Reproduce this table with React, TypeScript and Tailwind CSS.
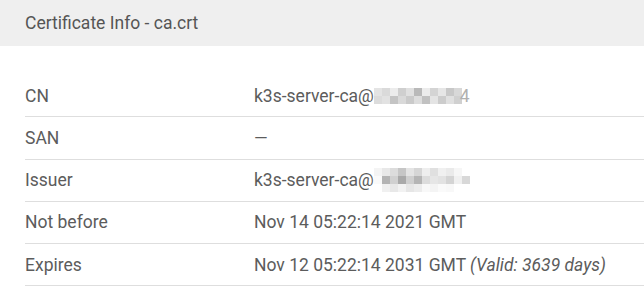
import React from 'react';

const font = { fontFamily: 'Roboto, "Liberation Sans", sans-serif' };

// blurred (pixelated) bits of the hostnames
const cnBlocks = [
  ['#e4e4e4', '#dadada', '#ececec', '#cfcfcf', '#e0e0e0', '#b9b9b9', '#ececec', '#d4d4d4', '#e6e6e6', '#c8c8c8', '#d8d8d8'],
  ['#dcdcdc', '#e2e2e2', '#c4c4c4', '#d9d9d9', '#cacaca', '#dddddd', '#c1c1c1', '#e4e4e4', '#cccccc', '#e0e0e0', '#d0d0d0'],
];
const issuerBlocks = [
  ['#f4f4f4', '#e8e8e8', '#dcdcdc', '#c6c6c6', '#e4e4e4', '#d6d6d6', '#eeeeee', '#e0e0e0', '#f0f0f0', '#eaeaea', '#f6f6f6', '#ffffff'],
  ['#fafafa', '#b4b4b4', '#d0d0d0', '#a9a9a9', '#cfcfcf', '#b5b5b5', '#dcdcdc', '#e6e6e6', '#e2e2e2', '#d4d4d4', '#f0f0f0', '#d8d8d8'],
  ['#ffffff', '#f0f0f0', '#e8e8e8', '#f2f2f2', '#e6e6e6', '#ececec', '#f8f8f8', '#f4f4f4', '#fafafa', '#f8f8f8', '#ffffff', '#ffffff'],
];

function Pixels({ blocks }: { blocks: string[][] }) {
  return (
    <span className="inline-flex flex-col align-middle">
      {blocks.map((row, i) => (
        <span key={i} className="flex">
          {row.map((c, j) => (
            <span key={j} className="block w-[8px] h-[8px]" style={{ background: c }} />
          ))}
        </span>
      ))}
    </span>
  );
}

const rows: { label: string; value: React.ReactNode }[] = [
  {
    label: 'CN',
    value: (
      <span className="flex items-center">
        k3s-server-ca@
        <Pixels blocks={cnBlocks} />
        <span className="ml-[-2px] text-[#b0b0b0]">4</span>
      </span>
    ),
  },
  { label: 'SAN', value: '—' },
  {
    label: 'Issuer',
    value: (
      <span className="flex items-center">
        k3s-server-ca@
        <Pixels blocks={issuerBlocks} />
      </span>
    ),
  },
  { label: 'Not before', value: 'Nov 14 05:22:14 2021 GMT' },
  {
    label: 'Expires',
    value: (
      <span>
        Nov 12 05:22:14 2031 GMT <i>(Valid: 3639 days)</i>
      </span>
    ),
  },
];

export default function App() {
  return (
    <div className="w-[644px] h-[287px] bg-white overflow-hidden text-[#5c5c5c]" style={font}>
      <div className="h-[46px] bg-[#efefef] flex items-center px-[25px] text-[17.5px] text-[#555]">
        Certificate Info - ca.crt
      </div>
      <div className="pl-[25px] pt-[29px]">
        {rows.map((r) => (
          <div key={r.label} className="flex items-center h-[42.25px] border-b border-[#dedede] text-[17.5px]">
            <div className="w-[229px] shrink-0">{r.label}</div>
            <div className="flex-1">{r.value}</div>
          </div>
        ))}
      </div>
    </div>
  );
}
